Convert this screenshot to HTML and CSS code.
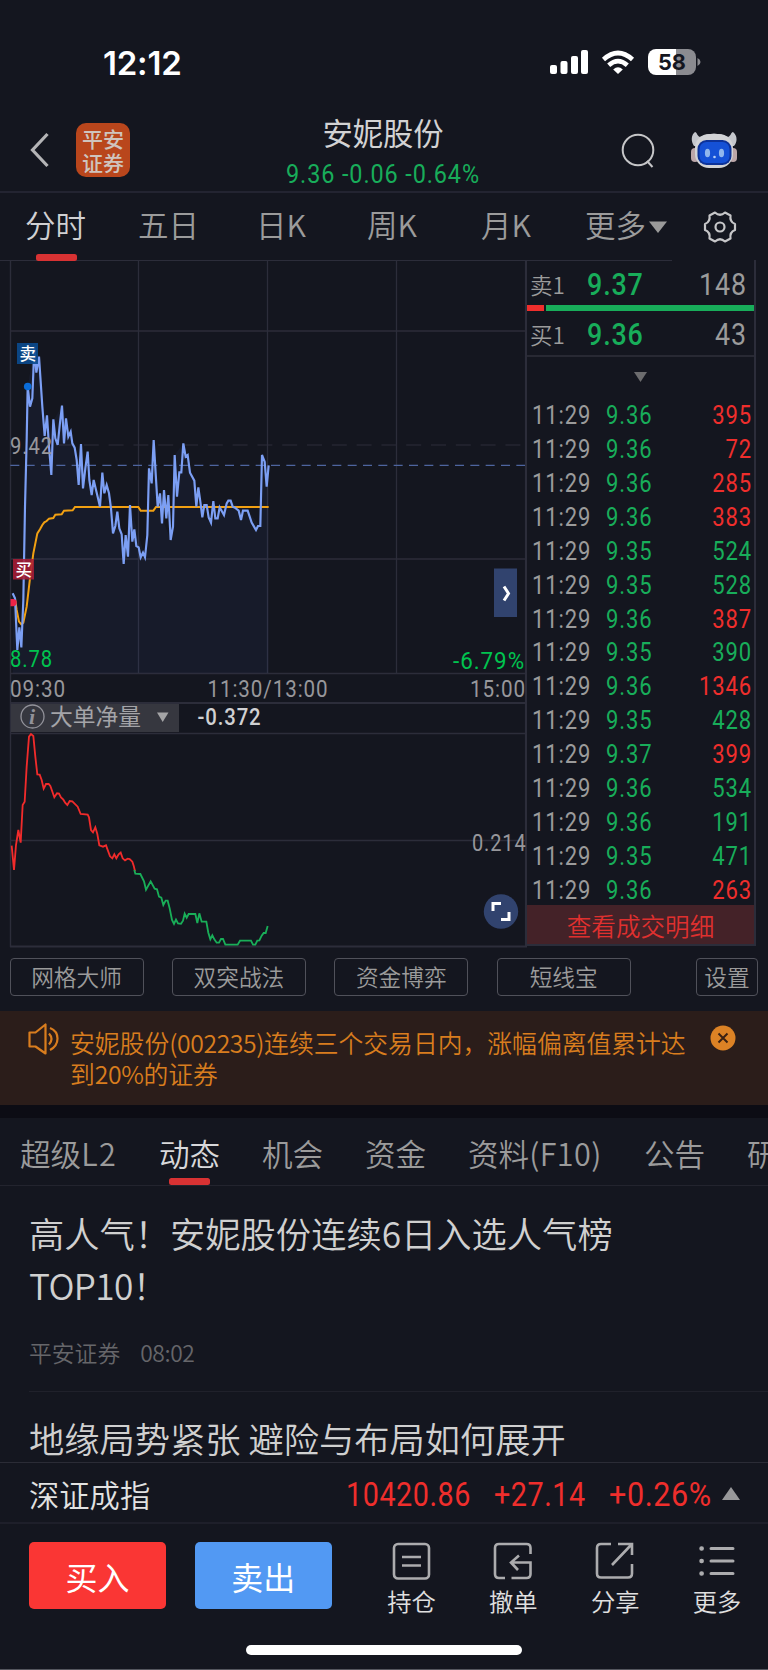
FILE: index.html
```html
<!DOCTYPE html>
<html lang="zh-CN">
<head>
<meta charset="utf-8">
<title>安妮股份</title>
<link rel="stylesheet" href="styles.css">
</head>
<body>
<div class="app">
  <div class="status">
    <span class="clock">12:12</span>
    <svg class="status-icons" width="152" height="28" viewBox="0 0 152 28">
      <g fill="#fff">
        <rect x="0" y="17" width="7" height="9" rx="2"/><rect x="10.500" y="13" width="7" height="13" rx="2"/>
        <rect x="21" y="8" width="7" height="18" rx="2"/><rect x="31" y="2" width="7" height="24" rx="2"/>
        <path d="M68 26 63.200 21.400Q68 17.200 72.800 21.400Z"/>
      </g>
      <path d="M53.500 11.500Q68-1.500 82.500 11.500M58.700 17.300Q68 9 77.300 17.300" fill="none" stroke="#fff" stroke-width="4.600"/>
      <clipPath id="cell"><rect x="98" y="1" width="48" height="26" rx="8"/></clipPath>
      <g clip-path="url(#cell)"><rect x="98" y="1" width="28" height="26" fill="#fff"/><rect x="126" y="1" width="20" height="26" fill="#8b8b90"/></g>
      <path d="M147.500 10Q150.500 11.500 150.500 14T147.500 18Z" fill="#8b8b90"/>
      <text x="108" y="21.500" class="battery-text" textLength="28" lengthAdjust="spacingAndGlyphs">58</text>
    </svg>
  </div>

  <header class="header">
    <svg class="back" width="20" height="36" viewBox="0 0 20 36"><path d="M17.500 2 2.500 18 17.500 34" fill="none" stroke="#b4b4b6" stroke-width="3.200"/></svg>
    <div class="logo"><span>平安</span><span>证券</span></div>
    <div class="stock">
      <h1>安妮股份</h1>
      <p>9.36 -0.06 -0.64%</p>
    </div>
    <svg class="search" width="34" height="36" viewBox="0 0 34 36"><g fill="none" stroke="#c6c6c8" stroke-width="2"><circle cx="17" cy="17" r="15.300"/><path d="M26 28 31.500 34"/></g></svg>
    <svg class="robot" width="46" height="38" viewBox="0 0 46 38">
      <path d="M3 15C-1 9 1 3 4 1 6 1 6 5 9 6Q23-1 37 6C40 5 40 1 42 1 46 4 47 10 43 15Z" fill="#c4c6cc"/>
      <rect x="0" y="17" width="8" height="14" rx="4" fill="#bca6a8"/><rect x="38" y="17" width="8" height="14" rx="4" fill="#bca6a8"/>
      <rect x="4" y="3" width="38" height="34" rx="14" fill="#d2d3d6"/>
      <rect x="6.500" y="9" width="34" height="25" rx="9" fill="#0d3298"/>
      <rect x="8.500" y="11" width="30" height="21" rx="7" fill="#1551d6"/>
      <ellipse cx="16.500" cy="22" rx="2.600" ry="4.300" fill="#91b7ed"/><ellipse cx="30.500" cy="22" rx="2.600" ry="4.300" fill="#91b7ed"/><circle cx="23.500" cy="26" r="1.300" fill="#b7d0f5"/>
    </svg>
  </header>

  <nav class="periods">
    <span class="on">分时</span><span>五日</span><span>日K</span><span>周K</span><span>月K</span>
    <span class="more">更多<svg width="18" height="12" viewBox="0 0 18 12"><path d="M0 .5H18L9 12Z" fill="#9a9a9a"/></svg></span>
    <svg class="gear" width="34" height="34" viewBox="0 0 34 34"><g fill="none" stroke="#c6c6c8" stroke-width="2.200"><path d="M12 2.500Q17 7 22 2.500L27.500 5.500Q26.500 12 32 14V20Q26.500 22 27.500 28.500L22 31.500Q17 27 12 31.500L6.500 28.500Q7.500 22 2 20V14Q7.500 12 6.500 5.500Z" stroke-linejoin="round"/><circle cx="17" cy="17" r="4.500"/></g></svg>
  </nav>

  <main class="market">
    <svg class="chart" width="527" height="688" viewBox="0 260 527 688">
      <g stroke="#2c2d3a" fill="none">
        <path d="M10.500 260V947" stroke-width="1.400"/>
        <path d="M138.500 261V673M267.500 261V673M396.500 261V673M10 331H526M10 559H526M10 673.500H526M10 733.500H526M10 840.500H526" stroke-width="1.300"/>
        <path d="M10 703H526M10 946.500H527M526 260V947" stroke-width="2.200"/>
        <path d="M59 445H526" stroke-dasharray="15 9.800"/>
      </g>
      <g transform="translate(0 440) scale(.33333)">
        <path class="area" d="M38 460 52 630 64 622 75 200 83-160 103-280 117-250 134-12 186-103 217 10 243 60 268 120 300 200 327 160 352 215 371 372 390 195 435 352 447 85 461 0 473 200 512 300 524 45 550 10 583 122 607 232 633 248 685 182 743 212 781 258 786 45 806 76V700H38Z"/>
        <path d="M31 76H1575" stroke="#4e659f" stroke-width="3.500" stroke-dasharray="27 19" fill="none"/>
        <path class="avg" d="M45 475 50 510 57 545 64 553 70 548 80 500 90 415 100 340 112 280 120 268 127 255 133 247 140 243 147 236 160 234 166 224 185 223 192 212 218 211 225 201 415 201 422 212 460 212 468 201H806"/>
        <path class="price-line" d="M38 460 45 475 52 630 58 562 64 622 70 480 75 200 80 0 83-160 90-100 97-125 103-280 109-202 117-250 127-100 134-12 141-74 147 20 154 105 160-62 166-5 173 15 180-52 186-103 192 10 198-65 205-10 212-25 217 10 224 23 230 60 236 135 243 12 249 145 256 85 263 35 268 120 275 165 281 120 300 200 307 98 313 160 320 135 327 160 333 205 339 280 346 258 352 215 358 265 365 283 371 372 377 285 384 350 390 195 397 305 403 268 409 318 416 322 422 352 429 338 435 352 442 285 447 85 455 130 461 0 467 100 473 200 480 160 486 250 492 150 499 235 505 165 512 300 519 260 524 45 531 170 538 97 544 97 550 10 557 50 563 45 570 98 583 122 589 200 595 142 601 185 607 232 613 195 620 195 626 232 633 248 640 183 646 235 653 235 659 202 672 225 680 190 685 182 692 182 698 200 705 203 716 212 723 240 729 212 743 212 755 248 768 270 774 258 781 258 786 45 794 65 800 140 806 76"/>
      </g>
      <g class="axis">
        <text x="10" y="454" textLength="43" lengthAdjust="spacingAndGlyphs">9.42</text>
        <text x="10" y="666.500" class="green" textLength="43" lengthAdjust="spacingAndGlyphs">8.78</text>
        <text x="453" y="668.500" class="green" textLength="72" lengthAdjust="spacingAndGlyphs">-6.79%</text>
        <text x="10" y="696.500" textLength="56" lengthAdjust="spacingAndGlyphs">09:30</text>
        <text x="207.500" y="696.500" textLength="121" lengthAdjust="spacingAndGlyphs">11:30/13:00</text>
        <text x="470" y="696.500" textLength="56" lengthAdjust="spacingAndGlyphs">15:00</text>
        <text x="472" y="850.500" textLength="54.500" lengthAdjust="spacingAndGlyphs">0.214</text>
      </g>
      <rect x="17" y="343" width="21" height="21" fill="#0a4a8e" fill-opacity=".9"/>
      <text x="19.500" y="359.500" class="tag">卖</text>
      <circle cx="27.700" cy="386.500" r="3.800" fill="#0a6cd8"/>
      <rect x="13" y="559" width="21" height="20.500" fill="#a91d36" fill-opacity=".88"/>
      <text x="15.500" y="575.500" class="tag">买</text>
      <path d="M10.500 598.900H13A3.700 3.700 0 0 1 13 606.300H10.500Z" fill="#ee2346"/>
      <rect x="494" y="568.500" width="23" height="48.500" fill="#31436e"/>
      <path d="M504 586.500 508.500 593.500 504 600.500" fill="none" stroke="#fff" stroke-width="3"/>

      <rect x="11" y="704" width="168" height="28" fill="#36373f"/>
      <circle cx="32.500" cy="716.500" r="11.500" fill="none" stroke="#92929a" stroke-width="1.300"/>
      <text x="29" y="724" class="info">i</text>
      <text x="50" y="725" class="metric" textLength="91">大单净量</text>
      <path d="M157 712.500H168.500L162.700 722Z" fill="#a4a4a6"/>
      <text x="197.500" y="725" class="value" textLength="64" lengthAdjust="spacingAndGlyphs">-0.372</text>
      <g transform="translate(0 690) scale(.33333)" fill="none" stroke-width="5.500">
        <path stroke="#f12b2b" d="M35 467 42 540 48 465 55 420 62 458 68 345 74 335 80 230 87 140 93 132 100 138 106 200 112 253 119 254 125 270 131 296 138 282 146 282 151 288 163 322 171 310 177 311 183 322 190 329 196 339 202 345 209 333 217 334 233 350 242 372 263 374 267 382 273 420 279 427 286 412 292 432 298 466 309 470 318 466 330 499 337 505 343 493 349 505 356 493 362 488 368 505 375 511 383 506 389 507 397 515 401 527 405 544"/>
        <path stroke="#19ae58" d="M403 540 406 551 421 552 432 574 438 599 452 574 464 596 471 598 477 620 484 623 490 645 497 632 503 632 509 655 516 690 522 702 528 689 534 700 543 701 549 692 554 671 560 683 566 672 586 672 592 699 598 670 605 695 619 695 625 728 631 748 637 736 643 748 650 758 657 758 663 747 669 747 676 764 713 764 720 752 753 752 759 764 766 764 772 752 778 751 785 737 791 729 797 729 803 708"/>
      </g>
      <circle cx="501" cy="911.500" r="17.200" fill="#31436e"/>
      <path d="M493 911V903.500H501M509 912V919.500H501" fill="none" stroke="#fff" stroke-width="3"/>
    </svg>

    <section class="book">
      <div class="quote"><span>卖1</span><b>9.37</b><em>148</em></div>
      <div class="ratio"><i></i><i></i></div>
      <div class="quote buy"><span>买1</span><b>9.36</b><em>43</em></div>
      <div class="expand"><svg width="13" height="10" viewBox="0 0 13 10"><path d="M0 0H13L6.500 10Z" fill="#6c6c6e"/></svg></div>
      <div class="trades">
        <div><span>11:29</span><b>9.36</b><em class="up">395</em></div>
        <div><span>11:29</span><b>9.36</b><em class="up">72</em></div>
        <div><span>11:29</span><b>9.36</b><em class="up">285</em></div>
        <div><span>11:29</span><b>9.36</b><em class="up">383</em></div>
        <div><span>11:29</span><b>9.35</b><em>524</em></div>
        <div><span>11:29</span><b>9.35</b><em>528</em></div>
        <div><span>11:29</span><b>9.36</b><em class="up">387</em></div>
        <div><span>11:29</span><b>9.35</b><em>390</em></div>
        <div><span>11:29</span><b>9.36</b><em class="up">1346</em></div>
        <div><span>11:29</span><b>9.35</b><em>428</em></div>
        <div><span>11:29</span><b>9.37</b><em class="up">399</em></div>
        <div><span>11:29</span><b>9.36</b><em>534</em></div>
        <div><span>11:29</span><b>9.36</b><em>191</em></div>
        <div><span>11:29</span><b>9.35</b><em>471</em></div>
        <div><span>11:29</span><b>9.36</b><em class="up">263</em></div>
      </div>
      <div class="detail">查看成交明细</div>
    </section>
  </main>

  <div class="tools">
    <span>网格大师</span><span>双突战法</span><span>资金博弈</span><span>短线宝</span><span class="set">设置</span>
  </div>

  <div class="notice">
    <svg width="32" height="32" viewBox="0 0 32 32"><g fill="none" stroke="#d97d1e" stroke-width="2.200" stroke-linejoin="round"><path d="M1.500 9.500H7.500L17.500 1.500V30.500L7.500 23.500H1.500Z"/><path d="M21 10.500Q26 16 21 21.500M22 5Q29.500 8 29.500 15.500T22 27"/></g></svg>
    <p>安妮股份<span>(002235)</span>连续三个交易日内，涨幅偏离值累计达<br>到<span>20%</span>的证券</p>
    <svg class="close" width="26" height="26" viewBox="0 0 26 26"><circle cx="13" cy="13" r="12.500" fill="#dc8225"/><path d="M8.500 8.500 17.500 17.500M17.500 8.500 8.500 17.500" stroke="#3a2113" stroke-width="2"/></svg>
  </div>

  <nav class="sections">
    <span>超级<i class="wide">L2</i></span><span class="on">动态</span><span>机会</span><span>资金</span><span>资料<i>(F10)</i></span><span>公告</span><span>研报</span>
  </nav>

  <div class="news">
    <article class="first">
      <h2>高人气！安妮股份连续<i>6</i>日入选人气榜<br><i class="latin">TOP10</i>！</h2>
      <p><span>平安证券</span><time>08:02</time></p>
    </article>
    <article><h2>地缘局势紧张 避险与布局如何展开</h2></article>
  </div>

  <div class="index">
    <span class="name">深证成指</span>
    <b>10420.86</b><b>+27.14</b><b class="pct">+0.26%</b>
    <svg width="18" height="14" viewBox="0 0 18 14"><path d="M0 13 9 0 18 13Z" fill="#98989a"/></svg>
  </div>

  <footer class="actions">
    <span class="btn buy-btn">买入</span><span class="btn sell-btn">卖出</span>
    <div class="act"><svg width="40" height="38" viewBox="0 0 40 38"><g fill="none" stroke="#acacae" stroke-width="2.600"><rect x="2" y="2" width="35" height="34.500" rx="4"/><path d="M10 15H29M10 23.500H29"/></g></svg><span>持仓</span></div>
    <div class="act"><svg width="40" height="38" viewBox="0 0 40 38"><g fill="none" stroke="#acacae" stroke-width="2.600"><path d="M37.500 12V6Q37.500 2 33.500 2H6Q2 2 2 6V32Q2 36 6 36H12M18.500 36H33.500Q37.500 36 37.500 32V20.500H18M26 13.500 18 20.500 25 28"/></g></svg><span>撤单</span></div>
    <div class="act"><svg width="40" height="38" viewBox="0 0 40 38"><g fill="none" stroke="#acacae" stroke-width="2.600"><path d="M16 2H6Q2 2 2 6V31.500Q2 35.500 6 35.500H33Q37 35.500 37 31.500V22M23 2H37V13M17 23 36 3"/></g></svg><span>分享</span></div>
    <div class="act"><svg width="40" height="38" viewBox="0 0 40 38"><g stroke="#acacae" stroke-width="3" stroke-linecap="round"><path d="M14 6.500H36M14 19H36M14 31.500H36"/><path d="M4.500 6.500H4.700M4.500 19H4.700M4.500 31.500H4.700" stroke-width="4.500"/></g></svg><span>更多</span></div>
  </footer>
  <div class="home"><i></i></div>
</div>
</body>
</html>
```
FILE: styles.css
```css
* { box-sizing: border-box; margin: 0; padding: 0; }
i, em { font-style: normal; }
body {
  width: 768px;
  background: #14161f;
  color: #9b9b9b;
  font-family: "Noto Sans CJK SC", sans-serif;
  font-weight: 350;
}
svg { display: block; flex: none; }
.app { width: 768px; height: 1670px; overflow: hidden; display: flex; flex-direction: column; border-bottom: 1px solid #55565e; }
.app > * { flex: none; }

/* status bar */
.status { height: 112px; display: flex; justify-content: space-between; padding: 48px 66px 0 103px; }
.clock { font: 600 33px/30px Inter, sans-serif; color: #fff; letter-spacing: -0.2px; }
.battery-text { font: 700 22px Inter, sans-serif; fill: #14161f; }

/* header */
.header { height: 81px; display: flex; align-items: flex-start; border-bottom: 2px solid #232431; padding-left: 30px; }
.back { margin-top: 20px; }
.logo { width: 54px; height: 54px; margin: 11px 0 0 26px; border-radius: 10px; background: #b9461c; color: #cfc4be; display: flex; flex-direction: column; align-items: center; justify-content: center; font-size: 21px; line-height: 24px; font-weight: 500; padding-bottom: 1px; }
.stock { width: 240px; margin-left: 133px; text-align: center; }
.stock h1 { font-size: 30.300px; line-height: 40px; font-weight: 400; color: #d2d2d3; }
.stock p { font: 400 26px/30px Roboto, sans-serif; letter-spacing: 1px; color: #18ad5a; margin-top: 7px; white-space: nowrap; transform: scaleX(.9); }
.search { margin: 21px 0 0 118px; }
.robot { margin: 19px 0 0 36px; }

/* period tabs */
.periods { height: 67px; display: grid; grid-template-columns: 113px 118px 111px 114px 104px 118px 34px; padding-left: 25px; align-items: center; font-size: 30.500px; line-height: 62px; position: relative; }
.periods > span { height: 67px; }
.periods::after { content: ""; position: absolute; left: 0; bottom: -1px; width: 672px; height: 1px; background: #2c2d3a; }
.periods .on { color: #d0d0d2; }
.on { position: relative; }
.on::after { content: ""; position: absolute; left: 11px; bottom: -1px; width: 41px; height: 7px; border-radius: 2.500px; background: #d83233; z-index: 1; }
.more { display: flex; align-items: flex-start; gap: 3px; }
.more svg { margin-top: 28px; }

/* chart and order book */
.market { height: 688px; display: flex; }
.area { fill: #6080ff; fill-opacity: .05; }
.avg { fill: none; stroke: #f1a012; stroke-width: 6; }
.price-line { fill: none; stroke: #7c9ff4; stroke-width: 6.500; }
.axis { font: 400 23px Roboto, sans-serif; letter-spacing: 1px; fill: #97979b; }
.axis .green { fill: #00c34f; }
.tag { font-size: 16.500px; font-weight: 500; fill: #fff; }
.info { font: italic 700 22px "Liberation Serif", serif; fill: #92929a; }
.metric { font-size: 22.800px; fill: #a4a4a8; font-weight: 400; }
.value { font: 500 23.500px Roboto, sans-serif; letter-spacing: 1px; fill: #d0d0d2; }
.book { width: 229px; height: 686px; border-right: 2px solid #2c2d3a; border-bottom: 2px solid #2c2d3a; display: flex; flex-direction: column; }
.quote { display: grid; grid-template-columns: 57px 70px 1fr; height: 45px; padding: 1px 7px 0 3px; line-height: 46px; font-size: 22.500px; white-space: nowrap; }
.quote b { font: 500 30.500px/47px Roboto, sans-serif; letter-spacing: 1px; color: #18ad5a; transform: scaleX(.88); transform-origin: left; }
.quote em { font: 400 30.500px/47px Roboto, sans-serif; letter-spacing: 1px; text-align: right; transform: scaleX(.88); transform-origin: right; }
.ratio { display: flex; gap: 2px; height: 6px; }
.ratio i { width: 17px; background: #ef2e2c; }
.ratio i + i { flex: 1; background: #18ad5a; }
.quote.buy { height: 46px; padding-top: 0; border-bottom: 2px solid #282933; }
.expand { height: 41px; padding: 15px 0 0 107px; }
.trades { height: 507px; display: flex; flex-direction: column; }
.trades div { height: 33.930px; display: grid; grid-template-columns: 74px 70px 1fr; padding: 0 2px 0 5px; font: 400 25px/35.500px Roboto, sans-serif; letter-spacing: 1px; flex: none; }
.trades div > * { transform: scaleX(.88); transform-origin: left; }
.trades b { font-weight: 400; color: #18ad5a; }
.trades em { color: #18ad5a; text-align: right; }
.trades div > em { transform-origin: right; }
.trades em.up { color: #ef2e2c; }
.detail { height: 39px; background: #442228; color: #df302f; text-align: center; font-size: 24.600px; line-height: 41px; flex: none; }

/* tool buttons */
.tools { height: 63px; padding: 10px 10px 0 9.500px; display: flex; gap: 28.400px; align-items: flex-start; }
.tools span { width: 134px; height: 38px; border: 1px solid #50515a; border-radius: 4px; text-align: center; font-size: 22.700px; line-height: 36px; }
.tools .set { width: 62px; margin-left: auto; }

/* notice */
.notice { height: 94px; background: #2b1d1a; color: #d97d1e; display: flex; align-items: flex-start; padding: 12px 0 0 28px; }
.notice p { width: 625px; margin: 4px 0 0 10px; font-size: 24.800px; line-height: 31px; white-space: nowrap; }
.notice p span { letter-spacing: -0.4px; }
.close { margin: 2px 0 0 15px; }

/* section tabs */
.sections { height: 81px; border-top: 13px solid #0c0c14; border-bottom: 1px solid #23242e; padding: 3px 0 0 20px; display: grid; grid-template-columns: 139px 103px 103px 103px 176px 103px 70px; overflow: hidden; font-size: 30.600px; line-height: 64px; white-space: nowrap; }
.sections .on { color: #d8d8da; }
.sections .on::after { bottom: 0; left: 10px; }
.sections i { letter-spacing: 0.4px; }
.sections .wide { letter-spacing: 1.500px; }

/* news */
.news { height: 276px; padding-left: 29px; overflow: hidden; color: #d0d0d0; }
.news h2 { font-size: 35.270px; line-height: 52px; font-weight: 350; white-space: nowrap; }
.first { height: 206px; padding-top: 21px; border-bottom: 1px solid #20212b; }
.latin { letter-spacing: -0.6px; }
.first p { display: flex; gap: 20px; margin-top: 25px; font-size: 22.800px; line-height: 34px; color: #66666a; }
.first time { letter-spacing: -0.4px; }
.first + article { padding-top: 20px; }

/* index bar */
.index { height: 62px; border-top: 1px solid #2b2c36; border-bottom: 2px solid #1e1f2a; display: grid; grid-template-columns: 317px 148px 115px 113px 18px; align-items: center; padding: 0 0 0 29px; }
.index .name { color: #e2e2e2; font-size: 30.300px; line-height: 56px; }
.index b { font: 400 32.500px/58px Roboto, sans-serif; letter-spacing: 0.600px; color: #ef2e2c; white-space: nowrap; padding-top: 3px; transform: scaleX(.885); transform-origin: left; }
.index .pct { transform: scaleX(.94); }
.index svg { margin: 0 0 0 0; }

/* bottom actions */
.actions { height: 108px; display: flex; padding: 18px 0 0 29px; }
.btn { width: 137px; height: 67px; border-radius: 5px; color: #fff; text-align: center; font-size: 32px; line-height: 68px; font-weight: 400; margin-right: 29px; }
.buy-btn { background: #fa3634; }
.sell-btn { background: #5299f3; margin-right: 5px; }
.act { width: 102px; display: flex; flex-direction: column; align-items: center; color: #e0e0e0; font-size: 24.300px; line-height: 30px; margin-left: 24px; }
.act + .act { margin-left: 0; }
.act svg { margin-bottom: 6px; }
.home { display: flex; justify-content: center; padding-top: 13px; }
.home i { width: 276px; height: 10px; border-radius: 5px; background: #fff; }
```
